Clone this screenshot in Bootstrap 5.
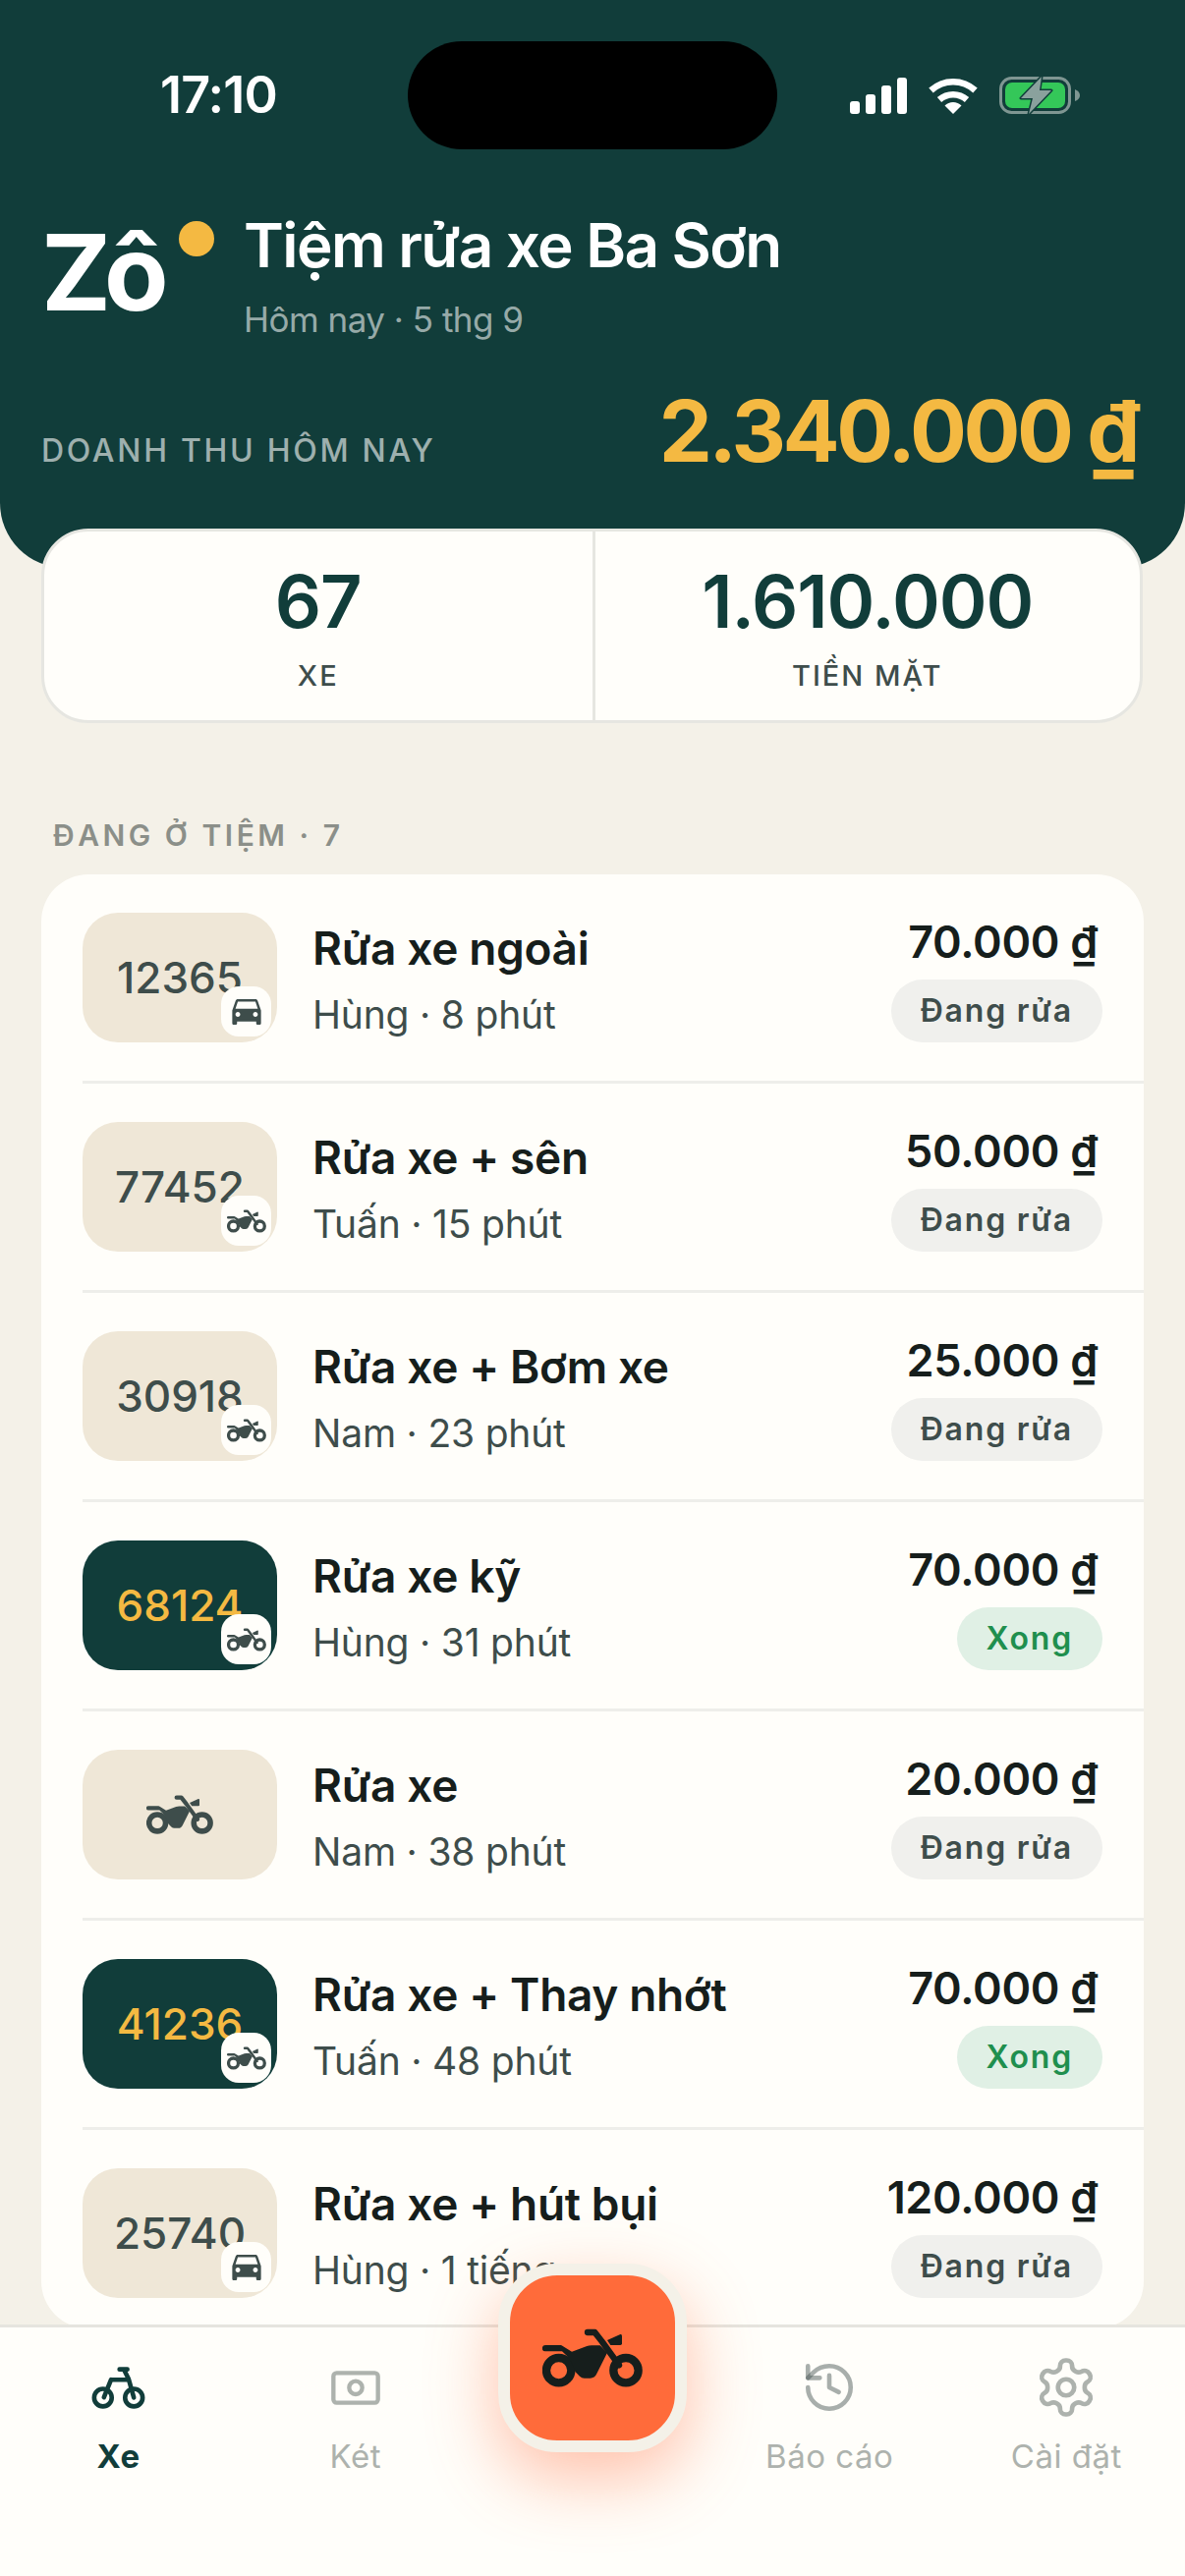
<!DOCTYPE html>
<html lang="vi">
<head>
    <meta charset="UTF-8">
    <meta name="viewport" content="width=device-width, initial-scale=1.0">
    <title>Zô - Tiệm rửa xe Ba Sơn</title>
    <link href="https://cdn.jsdelivr.net/npm/bootstrap@5.3.3/dist/css/bootstrap.min.css" rel="stylesheet">
    <style>
        body {
            font-family: Inter, "Liberation Sans", sans-serif;
            margin: 0;
            background-color: #f4f1e8;
            color: #161e1c;
        }

        .phone {
            width: 1206px;
            height: 2622px;
            overflow: hidden;
            background-color: #f4f1e8;
        }

        /* Top green area */
        .shop-head {
            background-color: #113d3a;
            height: 578px;
            padding: 42px 49px 0 42px;
            border-radius: 0 0 66px 66px;
            color: #fff;
        }

        .status-bar { height: 110px; }
        .status-time { width: 373px; padding-right: 12px; font-size: 52px; font-weight: 600; letter-spacing: -.8px; text-align: center; }
        .island { width: 376px; height: 110px; background-color: #000; border-radius: 55px; }
        .status-icons { margin-left: 74px; gap: 22px; }

        .brand-row { padding-top: 62px; }
        .logo-word { width: 136px; margin: 10px 0 0 0; font-size: 107px; line-height: 107px; font-weight: 700; letter-spacing: -7px; }
        .logo-dot { width: 36px; height: 36px; margin: 11px 30px 0 4px; background-color: #f4b942; border-radius: 50%; flex: none; }
        .shop-name { font-size: 62px; line-height: 72px; font-weight: 600; letter-spacing: -1.6px; }
        .shop-date { margin-top: 17px; font-size: 35px; line-height: 44px; color: rgba(255, 255, 255, 0.58); letter-spacing: -.5px; }

        .revenue-row { margin-top: 42px; }
        .revenue-label { margin-top: 40px; font-size: 32px; font-weight: 500; letter-spacing: 2.7px; color: rgba(255, 255, 255, 0.6); }
        .revenue-value { font-size: 86px; line-height: 100px; font-weight: 700; letter-spacing: -3.5px; color: #f4b942; }

        /* Stats */
        .stats-box {
            margin: -40px 43px 0 42px;
            height: 198px;
            background-color: #fffefa;
            border: 3px solid #e6e6e1;
            border-radius: 48px;
            position: relative;
        }

        .stat-cell { padding-top: 31px; text-align: center; height: 192px; }
        .stat-cell + .stat-cell { border-left: 3px solid #e6e6e1; }
        .stat-num { font-size: 74px; line-height: 80px; font-weight: 600; letter-spacing: -1px; color: #113d3a; }
        .stat-cap { margin-top: 18px; font-size: 29px; line-height: 36px; font-weight: 500; letter-spacing: 2px; color: #3e4d4b; }

        .section-label {
            margin: 94px 0 20px 54px;
            font-size: 30px;
            line-height: 40px;
            font-weight: 600;
            letter-spacing: 3.5px;
            color: #8b8f89;
        }

        /* Job list */
        .job-card {
            margin: 0 42px;
            background-color: #fffefa;
            border: 0;
            border-radius: 48px;
            overflow: hidden;
        }

        .job-row { padding: 0 0 0 42px; background: transparent; border: 0; color: inherit; }
        .job-inner { padding: 39px 42px 39px 0; border-bottom: 3px solid #eeeeea; }
        .job-row:last-child .job-inner { padding-bottom: 31px; border-bottom: 0; }

        .plate {
            width: 198px;
            height: 132px;
            border-radius: 36px;
            background-color: #efe7d7;
            color: #3e4d4b;
            font-size: 44px;
            font-weight: 500;
            position: relative;
            flex: none;
        }

        .plate-done { background-color: #113d3a; color: #f4b942; }

        .type-tag {
            position: absolute;
            right: 6px;
            bottom: 6px;
            width: 51px;
            height: 51px;
            border-radius: 18px;
            background-color: #fffefa;
            color: #3e4d4b;
        }

        .job-text { margin-left: 36px; padding-top: 9px; }
        .job-title { font-size: 46px; line-height: 54px; font-weight: 600; letter-spacing: -.35px; }
        .job-sub { margin-top: 17px; font-size: 39px; line-height: 48px; color: #3e4d4b; letter-spacing: -.2px; }

        .job-side { padding-top: 4px; }
        .job-price { margin-right: 5px; font-size: 45px; line-height: 52px; font-weight: 600; letter-spacing: -.3px; }
        .job-pill {
            margin-top: 12px;
            height: 64px;
            padding: 0 30px;
            font-size: 32px;
            line-height: 64px;
            font-weight: 600;
            letter-spacing: 1.8px;
            background-color: #f0f0ed;
            color: #3e4d4b;
        }

        .pill-done { background-color: #e0f0e5; color: #1f8f4e; }

        /* Bottom nav */
        .bottom-nav {
            height: 256px;
            flex: none;
            background-color: #fffefa;
            border-top: 3px solid #e6e5df;
            position: relative;
            z-index: 2;
        }

        .nav-cell { width: 20%; padding-top: 31px; color: #adb2ad; font-size: 33px; line-height: 40px; letter-spacing: .5px; }
        .nav-cell.active { color: #113d3a; font-weight: 700; }
        .nav-glyph { height: 60px; margin-bottom: 20px; }

        .wash-btn {
            position: absolute;
            left: 507px;
            top: -65px;
            width: 192px;
            height: 192px;
            padding: 0;
            border: 12px solid #f4f1e8;
            border-radius: 60px;
            background-color: #ff6b3a;
            color: #161e1c;
            box-shadow: 0 26px 70px rgba(255, 107, 58, 0.42);
        }
    </style>
</head>
<body>
    <!-- shared icons -->
    <svg width="0" height="0" class="position-absolute">
        <symbol id="moto" viewBox="0 0 306 180">
            <circle cx="50" cy="128" r="38" fill="none" stroke="currentColor" stroke-width="25"/>
            <circle cx="255" cy="128" r="38" fill="none" stroke="currentColor" stroke-width="25"/>
            <path fill="currentColor" d="M9 51H56a8 8 0 0 1 5 2L90 71L136 54Q142 52 150 52H176L198 74L166 138Q160 152 146 152H128Q120 152 114 146L100 132Q92 96 60 70H9a9.5 9.5 0 0 1 0-19Z"/>
            <path fill="none" stroke="currentColor" stroke-width="19" stroke-linecap="round" stroke-linejoin="round" d="M138 12H160L182 40L234 112"/>
            <path fill="currentColor" d="M198 36L238 18Q243 17 243 23V46Q243 51 238 51H208Z"/>
        </symbol>
        <symbol id="car" viewBox="3 5 18 16">
            <path fill="currentColor" d="M18.92 6.01C18.72 5.42 18.16 5 17.5 5h-11c-.66 0-1.21.42-1.42 1.01L3 12v8c0 .55.45 1 1 1h1c.55 0 1-.45 1-1v-1h12v1c0 .55.45 1 1 1h1c.55 0 1-.45 1-1v-8l-2.08-5.99zM6.5 16c-.83 0-1.5-.67-1.5-1.5S5.67 13 6.5 13s1.5.67 1.5 1.5S7.33 16 6.5 16zm11 0c-.83 0-1.5-.67-1.5-1.5s.67-1.5 1.5-1.5 1.5.67 1.5 1.5-.67 1.5-1.5 1.5zM5 11l1.5-4.5h11L19 11H5z"/>
        </symbol>
    </svg>

    <div class="phone d-flex flex-column">
        <header class="shop-head flex-shrink-0">
            <div class="status-bar d-flex align-items-center">
                <div class="status-time">17:10</div>
                <div class="island flex-shrink-0"></div>
                <div class="status-icons d-flex align-items-center">
                    <svg width="58" height="37" viewBox="0 0 58 37" fill="#fff">
                        <rect x="0" y="24" width="10" height="13" rx="3"/>
                        <rect x="16" y="17" width="10" height="20" rx="3"/>
                        <rect x="32" y="8" width="10" height="29" rx="3"/>
                        <rect x="48" y="0" width="10" height="37" rx="3"/>
                    </svg>
                    <svg width="50" height="37" viewBox="0 0 50 37" fill="none" stroke="#fff" stroke-width="6.5">
                        <path d="M2.5 13A33 33 0 0 1 47.5 13"/>
                        <path d="M11 22.5A21 21 0 0 1 39 22.5"/>
                        <path fill="#fff" stroke="none" d="M25 37L16.5 28.5A12 12 0 0 1 33.5 28.5Z"/>
                    </svg>
                    <svg width="82" height="40" viewBox="0 0 82 40">
                        <rect x="1.5" y="2.5" width="70" height="35" rx="11" fill="none" stroke="#7f9692" stroke-width="3"/>
                        <rect x="6" y="7" width="61" height="26" rx="7" fill="#34c759"/>
                        <path d="M77 14Q82 16 82 20Q82 24 77 26Z" fill="#7f9692"/>
                        <path d="M43 1L22 23H34L30 39L53 15H41Z" fill="#8aa19d" stroke="#113d3a" stroke-width="3" stroke-linejoin="round" paint-order="stroke"/>
                    </svg>
                </div>
            </div>

            <div class="brand-row d-flex align-items-start">
                <div class="logo-word">Zô</div>
                <div class="logo-dot"></div>
                <div>
                    <div class="shop-name">Tiệm rửa xe Ba Sơn</div>
                    <div class="shop-date">Hôm nay · 5 thg 9</div>
                </div>
            </div>

            <div class="revenue-row d-flex justify-content-between align-items-center">
                <div class="revenue-label">DOANH THU HÔM NAY</div>
                <div class="revenue-value">2.340.000 ₫</div>
            </div>
        </header>

        <div class="stats-box row g-0 flex-shrink-0">
            <div class="col-6 stat-cell">
                <div class="stat-num">67</div>
                <div class="stat-cap">XE</div>
            </div>
            <div class="col-6 stat-cell">
                <div class="stat-num">1.610.000</div>
                <div class="stat-cap">TIỀN MẶT</div>
            </div>
        </div>

        <div class="section-label flex-shrink-0">ĐANG Ở TIỆM · 7</div>

        <main class="flex-grow-1 overflow-hidden" id="jobs"></main>

        <nav class="bottom-nav d-flex">
            <div class="nav-cell active text-center">
                <div class="nav-glyph d-flex align-items-center justify-content-center">
                    <svg width="55" height="43" viewBox="0 0 165 130" fill="none" stroke="currentColor" stroke-width="14" stroke-linecap="round" stroke-linejoin="round">
                        <circle cx="35" cy="95" r="27"/>
                        <circle cx="130" cy="95" r="27"/>
                        <path d="M86 8H110M100 10L114 38L130 95M60 40H114M60 40L38 94"/>
                    </svg>
                </div>
                <div>Xe</div>
            </div>
            <div class="nav-cell text-center">
                <div class="nav-glyph d-flex align-items-center justify-content-center">
                    <svg width="50" height="35" viewBox="0 0 150 105" fill="none" stroke="currentColor" stroke-width="13">
                        <rect x="7" y="7" width="136" height="91" rx="10"/>
                        <circle cx="75" cy="52" r="20"/>
                    </svg>
                </div>
                <div>Két</div>
            </div>
            <div class="nav-cell"></div>
            <div class="nav-cell text-center">
                <div class="nav-glyph d-flex align-items-center justify-content-center">
                    <svg width="58" height="58" viewBox="0 0 24 24" fill="none" stroke="#3e4d4b" stroke-opacity=".45" stroke-width="1.9" stroke-linecap="round" stroke-linejoin="round">
                        <path d="M3 12a9 9 0 1 0 9-9 9.75 9.75 0 0 0-6.74 2.74L3 8"/>
                        <path d="M3 3v5h5"/>
                        <path d="M12 7v5l4 2"/>
                    </svg>
                </div>
                <div>Báo cáo</div>
            </div>
            <div class="nav-cell text-center">
                <div class="nav-glyph d-flex align-items-center justify-content-center">
                    <svg width="66" height="66" viewBox="0 0 24 24" fill="none" stroke="currentColor" stroke-width="1.7" stroke-linecap="round" stroke-linejoin="round">
                        <path d="M12.22 2h-.44a2 2 0 0 0-2 2v.18a2 2 0 0 1-1 1.73l-.43.25a2 2 0 0 1-2 0l-.15-.08a2 2 0 0 0-2.73.73l-.22.38a2 2 0 0 0 .73 2.73l.15.1a2 2 0 0 1 1 1.72v.51a2 2 0 0 1-1 1.74l-.15.09a2 2 0 0 0-.73 2.73l.22.38a2 2 0 0 0 2.73.73l.15-.08a2 2 0 0 1 2 0l.43.25a2 2 0 0 1 1 1.73V20a2 2 0 0 0 2 2h.44a2 2 0 0 0 2-2v-.18a2 2 0 0 1 1-1.73l.43-.25a2 2 0 0 1 2 0l.15.08a2 2 0 0 0 2.73-.73l.22-.39a2 2 0 0 0-.73-2.73l-.15-.08a2 2 0 0 1-1-1.74v-.5a2 2 0 0 1 1-1.74l.15-.09a2 2 0 0 0 .73-2.73l-.22-.38a2 2 0 0 0-2.73-.73l-.15.08a2 2 0 0 1-2 0l-.43-.25a2 2 0 0 1-1-1.73V4a2 2 0 0 0-2-2z"/>
                        <circle cx="12" cy="12" r="3"/>
                    </svg>
                </div>
                <div>Cài đặt</div>
            </div>

            <button type="button" class="wash-btn d-flex align-items-center justify-content-center">
                <svg width="102" height="60"><use href="#moto"/></svg>
            </button>
        </nav>
    </div>

    <script src="https://cdn.jsdelivr.net/npm/bootstrap@5.3.3/dist/js/bootstrap.bundle.min.js"></script>
    <script>
        // type: car | moto, plate empty means no plate read yet
        const jobs = [
            { plate: '12365', type: 'car',  title: 'Rửa xe ngoài',     sub: 'Hùng · 8 phút',  price: '70.000 ₫',  done: false },
            { plate: '77452', type: 'moto', title: 'Rửa xe + sên',     sub: 'Tuấn · 15 phút', price: '50.000 ₫',  done: false },
            { plate: '30918', type: 'moto', title: 'Rửa xe + Bơm xe',  sub: 'Nam · 23 phút',  price: '25.000 ₫',  done: false },
            { plate: '68124', type: 'moto', title: 'Rửa xe kỹ',        sub: 'Hùng · 31 phút', price: '70.000 ₫',  done: true },
            { plate: '',      type: 'moto', title: 'Rửa xe',           sub: 'Nam · 38 phút',  price: '20.000 ₫',  done: false },
            { plate: '41236', type: 'moto', title: 'Rửa xe + Thay nhớt', sub: 'Tuấn · 48 phút', price: '70.000 ₫', done: true },
            { plate: '25740', type: 'car',  title: 'Rửa xe + hút bụi', sub: 'Hùng · 1 tiếng', price: '120.000 ₫', done: false }
        ];

        function typeIcon(type) {
            if (type === 'car') return '<svg width="30" height="26"><use href="#car"/></svg>';
            return '<svg width="40" height="24"><use href="#moto"/></svg>';
        }

        document.getElementById('jobs').innerHTML =
            '<ul class="list-group job-card">' + jobs.map(function (j) {
                const plate = j.plate
                    ? j.plate + '<span class="type-tag d-flex align-items-center justify-content-center">' + typeIcon(j.type) + '</span>'
                    : '<svg width="68" height="40"><use href="#moto"/></svg>';
                return '<li class="list-group-item job-row"><div class="job-inner d-flex">' +
                    '<div class="plate d-flex align-items-center justify-content-center' + (j.done ? ' plate-done' : '') + '">' + plate + '</div>' +
                    '<div class="job-text flex-grow-1"><div class="job-title">' + j.title + '</div><div class="job-sub">' + j.sub + '</div></div>' +
                    '<div class="job-side d-flex flex-column align-items-end">' +
                    '<div class="job-price">' + j.price + '</div>' +
                    '<span class="job-pill rounded-pill' + (j.done ? ' pill-done' : '') + '">' + (j.done ? 'Xong' : 'Đang rửa') + '</span>' +
                    '</div></div></li>';
            }).join('') + '</ul>';
    </script>
</body>
</html>
